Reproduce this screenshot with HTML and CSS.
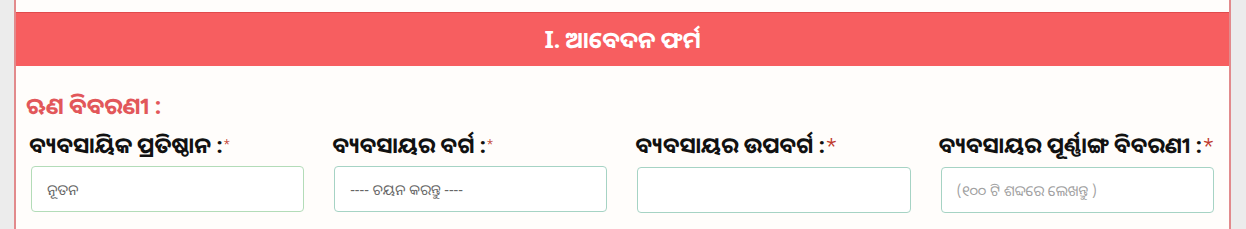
FILE: index.html
```html
<!DOCTYPE html>
<html lang="or">
<head>
    <meta charset="UTF-8">
    <meta name="viewport" content="width=device-width, initial-scale=1.0">
    <title>ଆବେଦନ ଫର୍ମ</title>
    <link rel="stylesheet" href="styles.css">
</head>
<body>
    <div class="form-card">
        <div class="form-header">I. ଆବେଦନ ଫର୍ମ</div>
        <div class="form-body">
            <h3 class="section-title">ଋଣ ବିବରଣୀ :</h3>
            <div class="row">
                <div class="col">
                    <label>ବ୍ୟବସାୟିକ ପ୍ରତିଷ୍ଠାନ :<span class="req small">*</span></label>
                    <input type="text" class="form-control" value="ନୂତନ">
                </div>
                <div class="col">
                    <label>ବ୍ୟବସାୟର ବର୍ଗ :<span class="req small">*</span></label>
                    <div class="form-control select">---- ଚୟନ କରନ୍ତୁ ----</div>
                </div>
                <div class="col">
                    <label>ବ୍ୟବସାୟର ଉପବର୍ଗ :<span class="req">*</span></label>
                    <div class="form-control select"></div>
                </div>
                <div class="col">
                    <label>ବ୍ୟବସାୟର ପୂର୍ଣ୍ଣାଙ୍ଗ ବିବରଣୀ :<span class="req">*</span></label>
                    <input type="text" class="form-control" placeholder="(୧୦୦ ଟି ଶବ୍ଦରେ ଲେଖନ୍ତୁ )">
                </div>
            </div>
        </div>
    </div>
</body>
</html>
```

FILE: styles.css
```css
body {
    margin: 0;
    padding: 0 15px 0 14px;
    background-color: #ececec;
    font-family: "Noto Sans Oriya", "Noto Sans", sans-serif;
    height: 229px;
    overflow: hidden;
}

.form-card {
    background-color: #fffdfb;
    border-left: 2px solid #e28a8c;
    border-right: 2px solid #e28a8c;
    padding-top: 12px;
    height: 217px;
}

.form-header {
    background-color: #f75e60;
    border-top: 1px solid #e04a4c;
    color: #fff;
    font-size: 23px;
    font-weight: bold;
    text-align: center;
    height: 53px;
    line-height: 52px;
}

.section-title {
    color: #e2575a;
    font-size: 23px;
    font-weight: bold;
    margin: 0;
    padding: 22px 0 0 10px;
    line-height: 34px;
}

.row {
    display: grid;
    grid-template-columns: repeat(4, 1fr);
}

.col {
    padding: 0 15px;
}

label {
    display: block;
    font-size: 22px;
    font-weight: bold;
    color: #111;
    line-height: 30px;
    margin: 7px 0 6px -2px;
    white-space: nowrap;
}

.req {
    color: #c0392b;
    font-weight: normal;
    font-size: 20px;
}

.req.small {
    font-size: 12px;
    vertical-align: 4px;
}

.form-control {
    display: block;
    box-sizing: border-box;
    width: 100%;
    height: 46px;
    padding: 0 15px;
    border: 1px solid #a6d3c4;
    border-radius: 4px;
    background-color: #fff;
    font-family: inherit;
    font-size: 14.5px;
    color: #666;
    line-height: 44px;
}

.col:first-child .form-control {
    border-color: #b3dcb8;
}

.form-control::placeholder {
    color: #a0a0a0;
}
```
